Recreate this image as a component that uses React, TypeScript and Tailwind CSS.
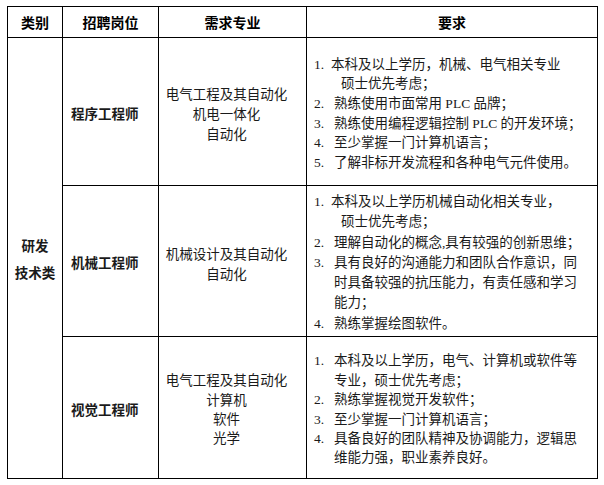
import React from "react";

type Line = { num?: string; text: string; numW?: string; indent?: boolean };

interface JobRow {
  position: string;
  majors: string[];
  majorsLeading: string;
  reqLeading: string;
  height: string;
  reqs: Line[];
}

const ROWS: JobRow[] = [
  {
    position: "程序工程师",
    majors: ["电气工程及其自动化", "机电一体化", "自动化"],
    majorsLeading: "leading-[20px]",
    reqLeading: "leading-[19.6px]",
    height: "h-[148px]",
    reqs: [
      { num: "1.", numW: "w-[17px]", text: "本科及以上学历，机械、电气相关专业" },
      { text: "硕士优先考虑；", indent: true },
      { num: "2.", text: "熟练使用市面常用 PLC 品牌；" },
      { num: "3.", text: "熟练使用编程逻辑控制 PLC 的开发环境；" },
      { num: "4.", text: "至少掌握一门计算机语言；" },
      { num: "5.", text: "了解非标开发流程和各种电气元件使用。" },
    ],
  },
  {
    position: "机械工程师",
    majors: ["机械设计及其自动化", "自动化"],
    majorsLeading: "leading-[20px]",
    reqLeading: "leading-[20.2px]",
    height: "h-[151px]",
    reqs: [
      { num: "1.", numW: "w-[17px]", text: "本科及以上学历机械自动化相关专业，" },
      { text: "硕士优先考虑；", indent: true },
      { num: "2.", text: "理解自动化的概念,具有较强的创新思维；" },
      { num: "3.", text: "具有良好的沟通能力和团队合作意识，同" },
      { num: "", text: "时具备较强的抗压能力，有责任感和学习" },
      { num: "", text: "能力；" },
      { num: "4.", text: "熟练掌握绘图软件。" },
    ],
  },
  {
    position: "视觉工程师",
    majors: ["电气工程及其自动化", "计算机", "软件", "光学"],
    majorsLeading: "leading-[19.4px]",
    reqLeading: "leading-[19.4px]",
    height: "h-[142px]",
    reqs: [
      { num: "1.", text: "本科及以上学历，电气、计算机或软件等" },
      { num: "", text: "专业，硕士优先考虑；" },
      { num: "2.", text: "熟练掌握视觉开发软件；" },
      { num: "3.", text: "至少掌握一门计算机语言；" },
      { num: "4.", text: "具备良好的团队精神及协调能力，逻辑思" },
      { num: "", text: "维能力强，职业素养良好。" },
    ],
  },
];

const serif = "font-['Liberation_Serif','Noto_Sans_CJK_SC',serif]";
const sans = "font-['Noto_Sans_CJK_SC','Liberation_Sans',sans-serif]";

export default function App() {
  return (
    <div className="bg-white w-[604px] h-[485px] pt-[6px] pl-[7px]">
      <table className={`table-fixed border-collapse w-[590px] text-[13.5px] text-[#1a1a1a] ${sans}`}>
        <colgroup>
          <col className="w-[55px]" />
          <col className="w-[96px]" />
          <col className="w-[148px]" />
          <col className="w-[291px]" />
        </colgroup>
        <thead>
          <tr className="h-[31px]">
            {["类别", "招聘岗位", "需求专业", "要求"].map((h) => (
              <th key={h} className="border border-black font-bold text-[14px] text-black text-center align-middle p-0">
                {h}
              </th>
            ))}
          </tr>
        </thead>
        <tbody>
          {ROWS.map((row, i) => (
            <tr key={row.position} className={row.height}>
              {i === 0 && (
                <td rowSpan={3} className="border border-black text-center align-middle font-bold leading-[27px] p-0 pt-[2px]">
                  <div>研发</div>
                  <div>技术类</div>
                </td>
              )}
              <td className="border border-black font-bold align-middle pl-[8px] pr-0 py-0 pt-[3px]">
                {row.position}
              </td>
              <td className={`border border-black text-center align-middle pr-[12px] pl-0 py-0 pt-[3px] ${row.majorsLeading}`}>
                {row.majors.map((m) => (
                  <div key={m}>{m}</div>
                ))}
              </td>
              <td className={`border border-black align-middle pl-[7px] pr-0 py-0 pt-[4px] whitespace-nowrap ${serif} ${row.reqLeading}`}>
                {row.reqs.map((l, j) => (
                  <div key={j} className="flex">
                    {l.indent ? (
                      <span className="w-[27px] shrink-0" />
                    ) : (
                      <span className={`${l.numW ?? "w-[20px]"} shrink-0`}>{l.num}</span>
                    )}
                    <span>{l.text}</span>
                  </div>
                ))}
              </td>
            </tr>
          ))}
        </tbody>
      </table>
    </div>
  );
}
